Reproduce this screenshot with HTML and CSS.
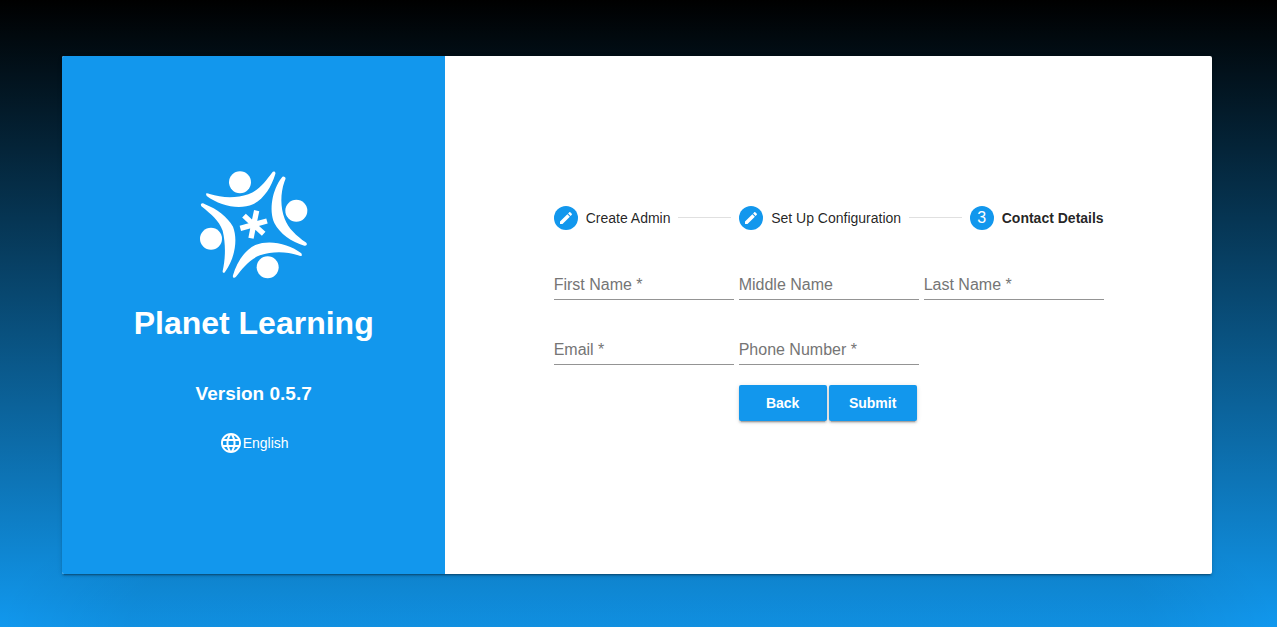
FILE: index.html
```html
<!DOCTYPE html>
<html lang="en">
<head>
<meta charset="utf-8">
<meta name="viewport" content="width=device-width, initial-scale=1">
<title>Planet Learning</title>
<link rel="stylesheet" href="styles.css">
</head>
<body class="page">
<main class="card">
  <section class="brand">
    <svg class="logo" viewBox="30 34 324 324" aria-hidden="true">
      <g fill="#fff">
        <circle cx="150" cy="68" r="33"/>
        <circle cx="319" cy="153" r="33"/>
        <circle cx="233" cy="323" r="33"/>
        <circle cx="63" cy="237" r="33"/>
        <path d="M48 103C48 99 54 101 59 103C95 115 139 116 175 104C206 92 226 66 246 39C250 33 258 35 256 43C244 83 221 118 189 134C148 151 90 139 50 109Z"/>
        <path d="M285 53C289 56 285 61 283 67C271 101 271 143 284 177C295 207 320 228 347 248C353 252 351 260 343 258C304 246 270 223 253 190C236 150 247 90 275 54C278 49 282 50 285 53Z"/>
        <path d="M336 287C335 291 329 289 324 287C289 275 245 275 210 287C180 298 159 324 138 351C133 357 127 354 129 347C140 308 163 272 196 256C238 239 297 252 334 281Z"/>
        <path d="M33 133C36 129 41 131 45 134C81 148 112 172 129 201C144 239 135 296 105 337C102 342 97 339 98 334C106 298 108 255 98 213C87 182 62 163 37 142C33 139 32 136 33 133Z"/>
      </g>
      <path d="M200 153L191 195M191 195L231 184M191 195L221 222M191 195L183 236M191 195L151 206M191 195L162 168" fill="none" stroke="#fff" stroke-width="16"/>
    </svg>
    <h1 class="title">Planet Learning</h1>
    <h2 class="version">Version 0.5.7</h2>
    <button class="language" type="button">
      <svg class="globe" viewBox="0 0 24 24" aria-hidden="true"><path fill="currentColor" d="M11.99 2C6.47 2 2 6.48 2 12s4.47 10 9.99 10C17.52 22 22 17.52 22 12S17.52 2 11.99 2zm6.93 6h-2.95c-.32-1.25-.78-2.45-1.38-3.56 1.84.63 3.37 1.91 4.33 3.56zM12 4.04c.83 1.2 1.48 2.53 1.91 3.96h-3.82c.43-1.43 1.08-2.76 1.91-3.96zM4.26 14C4.1 13.36 4 12.69 4 12s.1-1.36.26-2h3.38c-.08.66-.14 1.32-.14 2s.06 1.34.14 2H4.26zm.82 2h2.95c.32 1.25.78 2.45 1.38 3.56-1.84-.63-3.37-1.9-4.33-3.56zm2.95-8H5.08c.96-1.66 2.49-2.93 4.33-3.56C8.81 5.55 8.35 6.75 8.03 8zM12 19.96c-.83-1.2-1.48-2.53-1.91-3.96h3.82c-.43 1.43-1.08 2.76-1.91 3.96zM14.34 14H9.66c-.09-.66-.16-1.32-.16-2s.07-1.35.16-2h4.68c.09.65.16 1.32.16 2s-.07 1.34-.16 2zm.25 5.56c.6-1.11 1.06-2.31 1.38-3.56h2.95c-.96 1.65-2.49 2.93-4.33 3.56zM16.36 14c.08-.66.14-1.32.14-2s-.06-1.34-.14-2h3.38c.16.64.26 1.31.26 2s-.1 1.36-.26 2h-3.38z"/></svg>
      <span>English</span>
    </button>
  </section>
  <section class="setup">
    <div class="wizard">
      <ol class="stepper">
        <li class="step">
          <span class="badge"><svg class="pencil" viewBox="0 0 24 24" aria-hidden="true"><path fill="currentColor" d="M3 17.25V21h3.75L17.81 9.94l-3.75-3.75L3 17.25zM20.71 7.04c.39-.39.39-1.02 0-1.41l-2.34-2.34c-.39-.39-1.02-.39-1.41 0l-1.83 1.83 3.75 3.75 1.83-1.83z"/></svg></span>
          <span>Create Admin</span>
        </li>
        <li class="connector" aria-hidden="true"></li>
        <li class="step">
          <span class="badge"><svg class="pencil" viewBox="0 0 24 24" aria-hidden="true"><path fill="currentColor" d="M3 17.25V21h3.75L17.81 9.94l-3.75-3.75L3 17.25zM20.71 7.04c.39-.39.39-1.02 0-1.41l-2.34-2.34c-.39-.39-1.02-.39-1.41 0l-1.83 1.83 3.75 3.75 1.83-1.83z"/></svg></span>
          <span>Set Up Configuration</span>
        </li>
        <li class="connector" aria-hidden="true"></li>
        <li class="step step-current" aria-current="step">
          <span class="badge">3</span>
          <span>Contact Details</span>
        </li>
      </ol>
      <form class="form">
        <div class="field"><input class="input" id="first" type="text" placeholder=" " required><label class="label" for="first">First Name *</label></div>
        <div class="field"><input class="input" id="middle" type="text" placeholder=" "><label class="label" for="middle">Middle Name</label></div>
        <div class="field"><input class="input" id="last" type="text" placeholder=" " required><label class="label" for="last">Last Name *</label></div>
        <div class="field"><input class="input" id="email" type="email" placeholder=" " required><label class="label" for="email">Email *</label></div>
        <div class="field"><input class="input" id="phone" type="tel" placeholder=" " required><label class="label" for="phone">Phone Number *</label></div>
        <div class="actions">
          <button class="button" type="button">Back</button>
          <button class="button" type="submit">Submit</button>
        </div>
      </form>
    </div>
  </section>
</main>
</body>
</html>
```
FILE: styles.css
```css
* { box-sizing: border-box; }

.page {
  margin: 0;
  min-height: 100vh;
  padding: 56px 65px 53px 62px;
  display: flex;
  font-family: "Liberation Sans", Arial, sans-serif;
  background:
    radial-gradient(ellipse 50% 30% at 50% 100%, rgba(0, 0, 0, .06) 80%, transparent),
    linear-gradient(#000, #1198ee);
}

.card {
  flex: 1;
  display: grid;
  grid-template-columns: 1fr 2fr;
  border-radius: 2px;
  background: #fff;
  box-shadow: 0 3px 1px -2px rgba(0, 0, 0, .2), 0 2px 2px rgba(0, 0, 0, .14), 0 1px 5px rgba(0, 0, 0, .12);
}

.brand {
  display: flex;
  flex-direction: column;
  align-items: center;
  justify-content: center;
  padding-top: 2px;
  color: #fff;
  background: #1297ed;
  border-radius: 2px 0 0 2px;
}

.logo { width: 108px; height: 108px; }

.title {
  margin: 24px 0 0;
  font-size: 32px;
  line-height: 40px;
}

.version {
  margin: 40px 0 0;
  font-size: 19px;
  line-height: 22px;
}

.language {
  display: flex;
  align-items: center;
  margin: 20px 0 0;
  padding: 0;
  border: 0;
  color: inherit;
  background: none;
  font: 500 14px/36px "Liberation Sans", Arial, sans-serif;
  cursor: pointer;
}

.globe { width: 24px; height: 24px; }

.setup {
  display: flex;
  align-items: center;
  justify-content: center;
  padding-bottom: 4px;
}

.wizard { width: 550px; }

.stepper {
  display: flex;
  align-items: center;
  gap: 8px;
  margin: 0;
  padding: 0;
  list-style: none;
  font-size: 14px;
  color: rgba(0, 0, 0, .87);
}

.step {
  display: flex;
  align-items: center;
  gap: 8px;
  white-space: nowrap;
}

.step-current { font-weight: bold; }

.badge {
  display: flex;
  align-items: center;
  justify-content: center;
  width: 24px;
  height: 24px;
  border-radius: 50%;
  color: #fff;
  background: #1297ed;
  font-size: 16px;
  font-weight: normal;
}

.pencil { width: 16px; height: 16px; }

.connector {
  flex: 1;
  border-top: 1px solid #e0e0e0;
}

.form {
  display: grid;
  grid-template-columns: repeat(3, 1fr);
  column-gap: 5px;
  margin-top: 40px;
}

.field {
  display: grid;
  height: 65px;
  align-content: start;
}

.input,
.label {
  grid-area: 1 / 1;
  font: 16px/30px "Liberation Sans", Arial, sans-serif;
}

.input {
  width: 100%;
  height: 30px;
  padding: 0;
  border: 0;
  border-bottom: 1px solid #949494;
  border-radius: 0;
  outline: 0;
  color: rgba(0, 0, 0, .87);
  background: none;
}

.label {
  color: #757575;
  pointer-events: none;
}

.input:focus { border-color: #1297ed; }

.input:not(:placeholder-shown) + .label { visibility: hidden; }

.actions {
  grid-column: 2;
  display: flex;
  gap: 2px;
  margin-top: -15px;
}

.button {
  width: 88px;
  height: 36px;
  padding: 0;
  border: 0;
  border-radius: 2px;
  color: #fff;
  background: #1297ed;
  font: bold 14px/36px "Liberation Sans", Arial, sans-serif;
  box-shadow: 0 3px 1px -2px rgba(0, 0, 0, .2), 0 2px 2px rgba(0, 0, 0, .14), 0 1px 5px rgba(0, 0, 0, .12);
  cursor: pointer;
}
```
